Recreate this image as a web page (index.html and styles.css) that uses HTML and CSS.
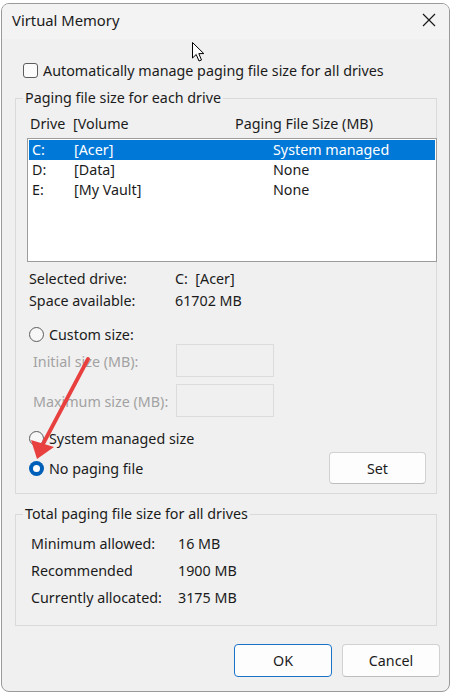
FILE: index.html
```html
<!DOCTYPE html>
<html>
<head>
<meta charset="utf-8">
<link rel="stylesheet" href="styles.css">
</head>
<body>
<div class="window">
  <div class="titlebar">
    <span class="title">Virtual Memory</span>
    <svg class="close" width="14" height="14" viewBox="0 0 14 14"><path d="M1 1 L13 13 M13 1 L1 13" stroke="#1a1a1a" stroke-width="1.2" fill="none"/></svg>
  </div>
  <div class="content">
    <label class="check-row"><span class="checkbox"></span><span>Automatically manage paging file size for all drives</span></label>

    <fieldset class="group group-drives">
      <legend>Paging file size for each drive</legend>
      <div class="list-head">
        <span class="h-drive">Drive</span><span class="h-vol">[Volume</span><span class="h-size">Paging File Size (MB)</span>
      </div>
      <div class="listbox">
        <div class="row selected"><span class="c-drive">C:</span><span class="c-vol">[Acer]</span><span class="c-size">System managed</span></div>
        <div class="row"><span class="c-drive">D:</span><span class="c-vol">[Data]</span><span class="c-size">None</span></div>
        <div class="row"><span class="c-drive">E:</span><span class="c-vol">[My Vault]</span><span class="c-size">None</span></div>
      </div>
      <div class="info info-first"><span class="i-label">Selected drive:</span><span class="i-val">C:&nbsp; [Acer]</span></div>
      <div class="info"><span class="i-label">Space available:</span><span class="i-val">61702 MB</span></div>

      <div class="radio-row radio-custom"><span class="radio"></span><span>Custom size:</span></div>
      <div class="field-row"><span class="f-label">Initial size (MB):</span><span class="input"></span></div>
      <div class="field-row field-second"><span class="f-label">Maximum size (MB):</span><span class="input"></span></div>
      <div class="radio-row radio-system"><span class="radio"></span><span>System managed size</span></div>
      <div class="radio-row radio-none"><span class="radio checked"></span><span class="grow">No paging file</span><button class="btn btn-set">Set</button></div>
    </fieldset>

    <fieldset class="group group-total">
      <legend>Total paging file size for all drives</legend>
      <div class="t-row t-first"><span class="t-label">Minimum allowed:</span><span>16 MB</span></div>
      <div class="t-row"><span class="t-label">Recommended</span><span>1900 MB</span></div>
      <div class="t-row"><span class="t-label">Currently allocated:</span><span>3175 MB</span></div>
    </fieldset>

    <div class="buttons">
      <button class="btn btn-ok">OK</button>
      <button class="btn btn-cancel">Cancel</button>
    </div>
  </div>
</div>
<svg class="overlay" width="452" height="694" viewBox="0 0 452 694">
  <line x1="88" y1="359" x2="43" y2="444" stroke="#e8403f" stroke-width="3.8" stroke-linecap="round"/>
  <polygon points="31,440 54,447 37,459" fill="#e8403f"/>
  <path d="M192.5 42.5 L192.5 58 L196.2 54.5 L199 61 L201.5 60 L198.8 53.6 L203.8 53.6 Z" fill="#fff" stroke="#000" stroke-width="1" stroke-linejoin="round"/>
</svg>
</body>
</html>
```

FILE: styles.css
```css
html, body {
  margin: 0;
  padding: 0;
  background: #ffffff;
}
body {
  width: 452px;
  height: 694px;
  position: relative;
  overflow: hidden;
  font-family: "Noto Sans", "Open Sans", sans-serif;
  font-size: 14.3px;
  color: #1b1b1b;
}
.window {
  box-sizing: border-box;
  margin: 3px 2px 0 1px;
  width: 449px;
  height: 689px;
  border: 1px solid #9a9a9a;
  border-radius: 8px;
  background: #f0f0f0;
  overflow: hidden;
}
.titlebar {
  height: 35px;
  display: flex;
  align-items: center;
  justify-content: space-between;
  padding: 0 13px 0 10px;
  background: #f3f3f3;
}
.title {
  font-size: 14.8px;
  color: #1b1b1b;
  margin-top: -4px;
}
.close {
  display: block;
  margin-top: -3px;
}
.content {
  padding: 0 12px 0 13px;
  display: flex;
  flex-direction: column;
}
.check-row {
  display: flex;
  align-items: center;
  gap: 5px;
  height: 16px;
  margin: 23px 0 0 8px;
}
.checkbox {
  box-sizing: border-box;
  width: 15px;
  height: 15px;
  border: 1px solid #5c5c5c;
  border-radius: 3px;
  background: #fbfbfb;
}
.group {
  margin: 0;
  padding: 0;
  border: 1px solid #dadada;
  min-width: 0;
}
.group legend {
  margin-left: 7px;
  padding: 0 2px;
  line-height: 20px;
  height: 20px;
}
.group-drives {
  margin-top: 10px;
  height: 406px;
  box-sizing: border-box;
}
.list-head {
  display: flex;
  height: 20px;
  line-height: 20px;
  margin: 6px 0 4px 14px;
}
.h-drive { width: 43px; }
.h-vol { width: 162px; }
.listbox {
  box-sizing: border-box;
  margin: 0 -1px 0 11px;
  height: 124px;
  border: 1px solid #9c9c9c;
  background: #ffffff;
  padding: 1px 1px 0 1px;
}
.row {
  display: flex;
  height: 20px;
  line-height: 20px;
  padding-left: 3px;
}
.row.selected {
  background: #0078d7;
  color: #ffffff;
}
.c-drive { width: 42px; }
.c-vol { width: 199px; }
.info {
  display: flex;
  height: 22px;
  line-height: 22px;
  margin-left: 13px;
}
.info-first { margin-top: 6px; }
.i-label { width: 146px; }
.radio-row {
  display: flex;
  align-items: center;
  gap: 5px;
  margin-left: 13px;
}
.radio-custom { height: 20px; margin-top: 12px; }
.radio-system { height: 20px; margin-top: 11px; }
.radio-none { height: 32px; margin-top: 4px; margin-right: 10px; }
.radio {
  box-sizing: border-box;
  width: 15px;
  height: 15px;
  border: 1px solid #5c5c5c;
  border-radius: 50%;
  background: #f7f7f7;
  flex: none;
}
.radio.checked {
  border: none;
  background: #005fb8;
  display: flex;
  align-items: center;
  justify-content: center;
}
.radio.checked::after {
  content: "";
  width: 7px;
  height: 7px;
  border-radius: 50%;
  background: #ffffff;
}
.grow { flex: 1; }
.field-row {
  display: flex;
  align-items: center;
  height: 33px;
  margin: 0 0 0 17px;
  color: #a2a2a2;
}
.field-second { margin-top: 7px; }
.f-label { width: 143px; padding-top: 2px; }
.input {
  box-sizing: border-box;
  width: 98px;
  height: 33px;
  border: 1px solid #dcdcdc;
  background: #f0f0f0;
}
.btn {
  box-sizing: border-box;
  width: 97px;
  height: 32px;
  font-family: inherit;
  font-size: 14.3px;
  color: #1b1b1b;
  background: #fdfdfd;
  border: 1px solid #d1d1d1;
  border-bottom-color: #bdbdbd;
  border-radius: 4px;
  padding: 0;
}
.group-total {
  margin-top: 10px;
  height: 122px;
  box-sizing: border-box;
}
.t-row {
  display: flex;
  height: 27px;
  line-height: 27px;
  margin-left: 15px;
}
.t-first { margin-top: 6px; }
.t-label { width: 147px; }
.buttons {
  display: flex;
  justify-content: flex-end;
  gap: 10px;
  margin: 18px -3px 0 0;
}
.btn-ok, .btn-cancel {
  width: 98px;
  height: 33px;
}
.btn-ok {
  border: 1px solid #1a73c8;
}
.overlay {
  position: absolute;
  left: 0;
  top: 0;
  pointer-events: none;
}
```
